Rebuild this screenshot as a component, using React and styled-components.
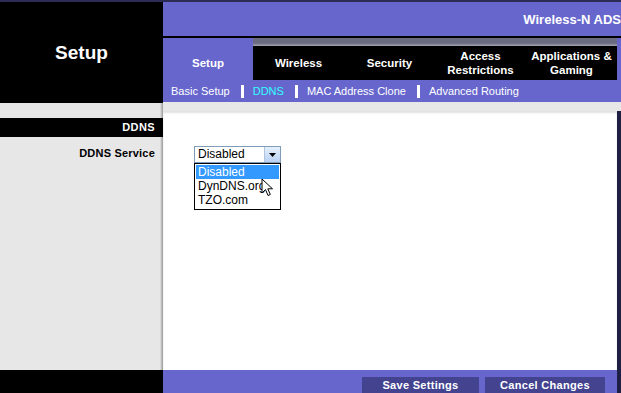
import React from "react";
import styled, {createGlobalStyle} from "styled-components";

const GlobalStyle = createGlobalStyle`
    html, body {
        margin: 0;
        padding: 0;
        background: #e7e7e7;
    }
    body {
        font-family: "Liberation Sans", Arial, sans-serif;
    }
`;

const tabs = [
    {label: "Setup", active: true},
    {label: "Wireless"},
    {label: "Security"},
    {label: "Access\nRestrictions"},
    {label: "Applications &\nGaming"},
];

const subLinks = [
    {label: "Basic Setup"},
    {label: "DDNS", current: true},
    {label: "MAC Address Clone"},
    {label: "Advanced Routing"},
];

const options = ["Disabled", "DynDNS.org", "TZO.com"];

const Cursor = () => (
    <CursorIcon width="14" height="20" viewBox="0 0 14 20">
        <path d="M1 1 L1 15 L4.5 11.5 L7 17.5 L9.3 16.5 L6.8 10.8 L11.5 10.8 Z"
              fill="#fff" stroke="#000" strokeWidth="1" strokeLinejoin="miter"/>
    </CursorIcon>
);

const App = () => {
    return (
        <>
            <GlobalStyle/>
            <Page>
                <TopLine/>
                <Header>
                    <Brand>Setup</Brand>
                    <HeaderRight>
                        <TitleBar>
                            <TitleText>Wireless-N ADS</TitleText>
                        </TitleBar>
                        <Divider/>
                        <TabRow>
                            {tabs.map((t) => (
                                <Tab key={t.label} $active={t.active}>{t.label}</Tab>
                            ))}
                        </TabRow>
                        <SubNav>
                            {subLinks.map((l, i) => (
                                <React.Fragment key={l.label}>
                                    {i > 0 && <Sep/>}
                                    <SubLink $current={l.current}>{l.label}</SubLink>
                                </React.Fragment>
                            ))}
                        </SubNav>
                    </HeaderRight>
                </Header>

                <Body>
                    <Sidebar>
                        <SectionBar>DDNS</SectionBar>
                        <FieldLabel>DDNS Service</FieldLabel>
                    </Sidebar>
                    <ContentWrap>
                        <Panel>
                            <SelectWrap>
                                <SelectBox>
                                    <SelectValue>Disabled</SelectValue>
                                    <ArrowButton>
                                        <svg width="7" height="4" viewBox="0 0 7 4">
                                            <path d="M0 0 H7 L3.5 4 Z" fill="#000"/>
                                        </svg>
                                    </ArrowButton>
                                </SelectBox>
                                <OptionList>
                                    {options.map((o, i) => (
                                        <Option key={o} $selected={i === 0}>{o}</Option>
                                    ))}
                                </OptionList>
                                <Cursor/>
                            </SelectWrap>
                        </Panel>
                    </ContentWrap>
                </Body>

                <Footer>
                    <FooterLeft/>
                    <FooterBar>
                        <FooterButton $w="117px">Save Settings</FooterButton>
                        <FooterButton $w="120px">Cancel Changes</FooterButton>
                    </FooterBar>
                </Footer>
            </Page>
        </>
    );
};

export default App;

// Styled Components
const Page = styled.div`
    width: 621px;
    height: 393px;
    overflow: hidden;
    display: flex;
    flex-direction: column;
    background: #e7e7e7;
`;

const TopLine = styled.div`
    height: 2px;
    background: #2b2b55;
`;

const Header = styled.div`
    display: flex;
    height: 101px;
`;

const Brand = styled.div`
    width: 163px;
    flex-shrink: 0;
    box-sizing: border-box;
    background: #000;
    color: #fff;
    font-size: 19px;
    font-weight: bold;
    display: flex;
    justify-content: center;
    align-items: center;
`;

const HeaderRight = styled.div`
    flex: 1;
    display: flex;
    flex-direction: column;
    min-width: 0;
`;

const TitleBar = styled.div`
    height: 34px;
    background: #6666cc;
    display: flex;
    align-items: center;
    justify-content: flex-end;
`;

const TitleText = styled.span`
    color: #fff;
    font-size: 13px;
    font-weight: bold;
    white-space: nowrap;
    padding-right: 0;
`;

const Divider = styled.div`
    height: 2px;
    background: #000;
`;

const TabRow = styled.div`
    display: flex;
    height: 42px;
    background: #6666cc;
`;

const Tab = styled.div`
    width: ${(p) => (p.$active ? "90px" : "91px")};
    flex-shrink: 0;
    box-sizing: border-box;
    color: #fff;
    font-size: 11.5px;
    font-weight: bold;
    line-height: 14px;
    white-space: pre-line;
    text-align: center;
    display: flex;
    align-items: center;
    justify-content: center;
    padding-top: ${(p) => (p.$active ? "8px" : "0")};
    border-top: ${(p) => (p.$active ? "none" : "8px solid transparent")};
    background: ${(p) => (p.$active
        ? "#6666cc"
        : "linear-gradient(#000, #000) padding-box, linear-gradient(#6a6a80 0 12%, #ffffff 30%, #d0d0d8 55%, #9a9aa8 75%, #3a3a4a 100%) border-box")};
`;

const SubNav = styled.div`
    height: 22px;
    background: #6666cc;
    display: flex;
    align-items: center;
    padding-left: 8px;
`;

const SubLink = styled.span`
    color: ${(p) => (p.$current ? "#33ffff" : "#fff")};
    font-size: 11px;
    white-space: nowrap;
`;

const Sep = styled.span`
    width: 3px;
    height: 13px;
    background: #fff;
    margin: 0 9px 0 11px;
`;

const Body = styled.div`
    flex: 1;
    display: flex;
    min-height: 0;
`;

const Sidebar = styled.div`
    width: 163px;
    flex-shrink: 0;
    box-sizing: border-box;
    padding-top: 15px;
    background: linear-gradient(to right, #e7e7e7 0 160px, #c9c9c9 161px, #9a9a9a 163px);
    display: flex;
    flex-direction: column;
`;

const SectionBar = styled.div`
    height: 19px;
    background: #000;
    color: #fff;
    font-size: 11px;
    font-weight: bold;
    text-align: right;
    line-height: 19px;
    padding-right: 8px;
    letter-spacing: 0.4px;
`;

const FieldLabel = styled.div`
    color: #000;
    font-size: 11px;
    font-weight: bold;
    text-align: right;
    padding: 10px 8px 0 0;
    letter-spacing: 0.2px;
`;

const ContentWrap = styled.div`
    flex: 1;
    display: flex;
    flex-direction: column;
    padding-top: 8px;
    background: #e7e7e7;
`;

const Panel = styled.div`
    flex: 1;
    background: #fff;
    border-right: 4px solid #1f1f45;
    padding: 35px 0 0 31px;
    box-shadow: inset 0 2px 2px rgba(0, 0, 0, 0.12);
`;

const SelectWrap = styled.div`
    position: relative;
    width: 87px;
`;

const SelectBox = styled.div`
    display: flex;
    height: 17px;
    box-sizing: border-box;
    border: 1px solid #7f9db9;
    background: #fff;
`;

const SelectValue = styled.div`
    flex: 1;
    font-size: 12px;
    line-height: 15px;
    padding-left: 3px;
    color: #000;
`;

const ArrowButton = styled.div`
    width: 15px;
    border-left: 1px solid #b0c4e0;
    background: linear-gradient(#e6f0fc, #b9d1f2);
    display: flex;
    align-items: center;
    justify-content: center;
`;

const OptionList = styled.div`
    border: 1px solid #000;
    background: #fff;
    padding: 1px 1px 2px;
`;

const Option = styled.div`
    height: 14px;
    line-height: 14px;
    font-size: 12px;
    padding-left: 2px;
    color: ${(p) => (p.$selected ? "#fff" : "#000")};
    background: ${(p) => (p.$selected ? "#3399ff" : "transparent")};
`;

const CursorIcon = styled.svg`
    position: absolute;
    left: 67px;
    top: 32px;
`;

const Footer = styled.div`
    display: flex;
    height: 23px;
`;

const FooterLeft = styled.div`
    width: 163px;
    background: #000;
`;

const FooterBar = styled.div`
    flex: 1;
    background: #6666cc;
    border-right: 4px solid #1f1f45;
    display: flex;
    align-items: flex-end;
    padding-left: 199px;
    gap: 6px;
`;

const FooterButton = styled.button`
    width: ${(p) => p.$w};
    height: 16px;
    border: none;
    background: #43438f;
    color: #fff;
    font-family: "Liberation Sans", Arial, sans-serif;
    font-size: 11px;
    font-weight: bold;
    letter-spacing: 0.3px;
    padding: 0;
`;
